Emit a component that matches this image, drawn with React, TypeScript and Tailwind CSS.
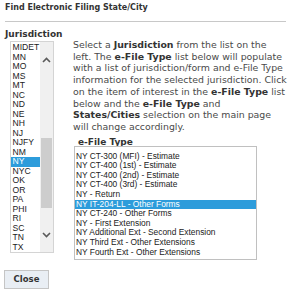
const jurisdictions = [
  'MIDET', 'MN', 'MO', 'MS', 'MT', 'NC', 'ND', 'NE', 'NH', 'NJ', 'NJFY',
  'NM', 'NY', 'NYC', 'OK', 'OR', 'PA', 'PHI', 'RI', 'SC', 'TN', 'TX',
];

const fileTypes = [
  'NY CT-300 (MFI) - Estimate',
  'NY CT-400 (1st) - Estimate',
  'NY CT-400 (2nd) - Estimate',
  'NY CT-400 (3rd) - Estimate',
  'NY - Return',
  'NY IT-204-LL - Other Forms',
  'NY CT-240 - Other Forms',
  'NY - First Extension',
  'NY Additional Ext - Second Extension',
  'NY Third Ext - Other Extensions',
  'NY Fourth Ext - Other Extensions',
];

const B = ({ children }: { children: React.ReactNode }) => (
  <b className="font-bold text-[#333]">{children}</b>
);

const Chevron = ({ up }: { up?: boolean }) => (
  <svg width="9" height="6" viewBox="0 0 9 6" className="shrink-0">
    <path
      d={up ? 'M1 5 L4.5 1.5 L8 5' : 'M1 1 L4.5 4.5 L8 1'}
      fill="none"
      stroke="#5a5a5a"
      strokeWidth="1.6"
    />
  </svg>
);

export default function App() {
  return (
    <div className="w-[291px] h-[302px] bg-white overflow-hidden font-['DejaVu_Sans',sans-serif] text-[#4a4a4a]">
      {/* title */}
      <div className="pl-[5px] h-[15px] leading-[15px] text-[8px] font-bold text-[#333] whitespace-nowrap">
        Find Electronic Filing State/City
      </div>
      <div className="mx-[5px] mt-[6px] border-t border-[#c8c8c8]" />

      <div className="pl-[5px] mt-[6px] h-[12px] leading-[12px] text-[9px] font-bold text-[#333]">
        Jurisdiction
      </div>

      <div className="flex mt-[-1px]">
        {/* jurisdiction list */}
        <div className="ml-[10px] mt-[2px] w-[44px] h-[212px] shrink-0 border border-[#d4d4d4] flex bg-white overflow-hidden">
          <div className="w-[29px] shrink-0 pt-[1px] font-['Liberation_Sans',Arial,sans-serif] text-[8.6px] text-[#222]">
            {jurisdictions.map((j) => (
              <div
                key={j}
                className={
                  'h-[9.5px] leading-[9.5px] pl-[1.5px] ' +
                  (j === 'NY' ? 'bg-[#2d9cdb] text-white' : '')
                }
              >
                {j}
              </div>
            ))}
          </div>
          <div className="w-[13px] shrink-0 bg-[#f0f0f0] flex flex-col items-center">
            <div className="mt-[15px]">
              <Chevron up />
            </div>
            <div className="mt-[75px] w-[11px] h-[70px] bg-[#cdcdcd]" />
            <div className="mt-[24px]">
              <Chevron />
            </div>
          </div>
        </div>

        {/* description + e-file list */}
        <div className="ml-[19px] flex flex-col">
          <p className="text-[9.4px] leading-[11.7px] whitespace-nowrap">
            Select a <B>Jurisdiction</B> from the list on the
            <br />
            left. The <B>e-File Type</B> list below will populate
            <br />
            with a list of jurisdiction/form and e-File Type
            <br />
            information for the selected jurisdiction. Click
            <br />
            on the item of interest in the <B>e-File Type</B> list
            <br />
            below and the <B>e-File Type</B> and
            <br />
            <B>States/Cities</B> selection on the main page
            <br />
            will change accordingly.
          </p>

          <div className="pl-[5px] mt-[4px] h-[10px] leading-[10px] text-[9px] font-bold text-[#333]">
            e-File Type
          </div>

          <div className="ml-[1px] mt-[-1px] w-[183px] h-[114px] border border-[#c0c0c0] pt-[5px] font-['Liberation_Sans',Arial,sans-serif] text-[8.4px] text-[#222]">
            {fileTypes.map((t) => (
              <div
                key={t}
                className={
                  'h-[9.6px] leading-[9.6px] pl-[1px] whitespace-nowrap ' +
                  (t.startsWith('NY IT-204') ? 'bg-[#2d9cdb] text-white' : '')
                }
              >
                {t}
              </div>
            ))}
          </div>
        </div>
      </div>

      <button className="ml-[4px] mt-[10px] w-[45px] h-[19px] border border-[#c5c5c5] bg-[#e9eef4] text-[8.5px] font-bold text-[#333] leading-none">
        Close
      </button>
    </div>
  );
}
